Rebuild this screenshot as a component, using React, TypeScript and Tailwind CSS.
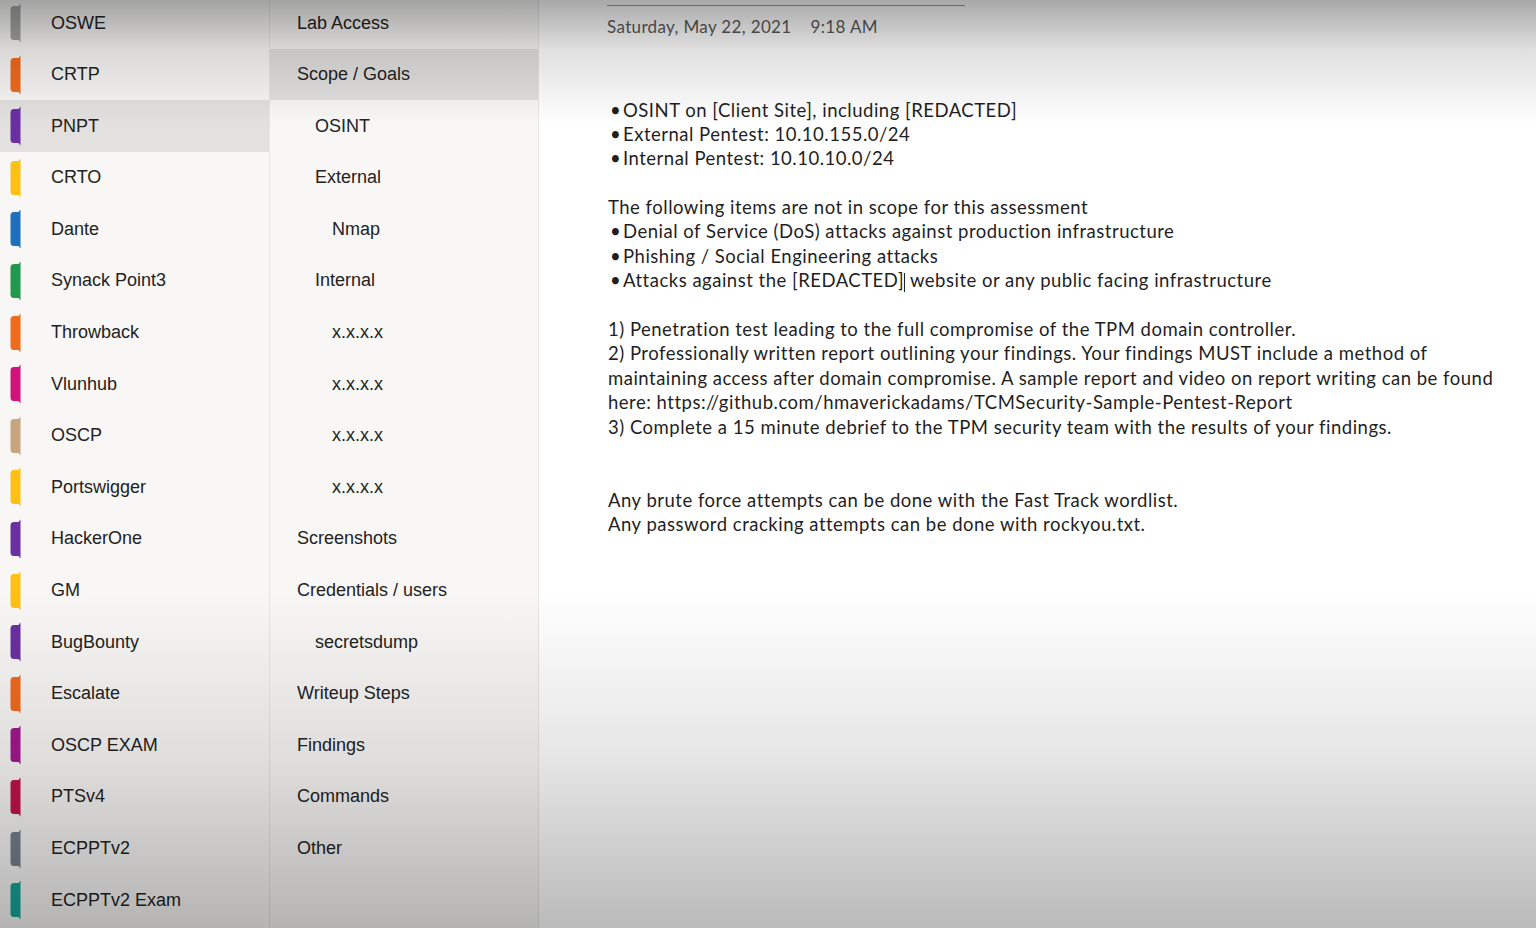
import React from "react";

const sections: { name: string; color: string }[] = [
  { name: "OSWE", color: "#a3a3a3" },
  { name: "CRTP", color: "#f26b1d" },
  { name: "PNPT", color: "#6b2fa3" },
  { name: "CRTO", color: "#ffc014" },
  { name: "Dante", color: "#1f6fbf" },
  { name: "Synack Point3", color: "#1f9a4d" },
  { name: "Throwback", color: "#f26b1d" },
  { name: "Vlunhub", color: "#d3127c" },
  { name: "OSCP", color: "#c8a57f" },
  { name: "Portswigger", color: "#ffc014" },
  { name: "HackerOne", color: "#6b2fa3" },
  { name: "GM", color: "#ffc014" },
  { name: "BugBounty", color: "#6b2fa3" },
  { name: "Escalate", color: "#f26b1d" },
  { name: "OSCP EXAM", color: "#a3178f" },
  { name: "PTSv4", color: "#c3124d" },
  { name: "ECPPTv2", color: "#76808a" },
  { name: "ECPPTv2 Exam", color: "#17a597" },
];

const pages: { name: string; level: number }[] = [
  { name: "Lab Access", level: 0 },
  { name: "Scope / Goals", level: 0 },
  { name: "OSINT", level: 1 },
  { name: "External", level: 1 },
  { name: "Nmap", level: 2 },
  { name: "Internal", level: 1 },
  { name: "x.x.x.x", level: 2 },
  { name: "x.x.x.x", level: 2 },
  { name: "x.x.x.x", level: 2 },
  { name: "x.x.x.x", level: 2 },
  { name: "Screenshots", level: 0 },
  { name: "Credentials / users", level: 0 },
  { name: "secretsdump", level: 1 },
  { name: "Writeup Steps", level: 0 },
  { name: "Findings", level: 0 },
  { name: "Commands", level: 0 },
  { name: "Other", level: 0 },
];

function Tab({ color }: { color: string }) {
  return (
    <svg width="12" height="40" viewBox="0 0 12 40" className="shrink-0">
      <path
        d="M11.5 0.5 L11.5 39.5 L9.5 37 L5 37 Q1.5 37 1.5 33.5 L1.5 6.5 Q1.5 3 5 3 L9.5 3 Z"
        fill={color}
      />
    </svg>
  );
}

const Line = ({ children }: { children?: React.ReactNode }) => (
  <div className="h-[24.4px] leading-[24.4px] whitespace-pre">{children ?? "\u00a0"}</div>
);

const Bullet = ({ children }: { children: React.ReactNode }) => (
  <div className="h-[24.4px] leading-[24.4px] whitespace-pre flex">
    <span className="w-[15px] pl-[2px]">•</span>
    <span>{children}</span>
  </div>
);

export default function App() {
  return (
    <div className="relative w-[1536px] h-[928px] overflow-hidden bg-white flex font-['Liberation_Sans',Arial,sans-serif]">
      {/* Sections column */}
      <div className="w-[269px] shrink-0 bg-[#f8f7f6] text-[18px] text-[#222]">
        <div className="mt-[-2.8px]">
          {sections.map((s) => (
            <div
              key={s.name}
              className={`h-[51.6px] flex items-center pl-[9px] ${s.name === "PNPT" ? "bg-[#e2e1e0]" : ""}`}
            >
              <Tab color={s.color} />
              <span className="ml-[30px]">{s.name}</span>
            </div>
          ))}
        </div>
      </div>

      {/* Pages column */}
      <div className="w-[270px] shrink-0 bg-[#f8f7f6] border-l border-r border-[#e6e5e4] text-[18px] text-[#222]">
        <div className="mt-[-2.8px]">
          {pages.map((p, i) => (
            <div
              key={i}
              className={`h-[51.6px] flex items-center ${p.level === 0 ? "pl-[27px]" : p.level === 1 ? "pl-[45px]" : "pl-[62px]"} ${p.name === "Scope / Goals" ? "bg-[#e2e1e0]" : ""}`}
            >
              {p.name}
            </div>
          ))}
        </div>
      </div>

      {/* Content */}
      <div className="flex-1 pl-[68px] font-['Lato','Open_Sans',sans-serif] text-[#1f1f1f]">
        <div className="w-[358px] h-[1px] bg-[#9a9a9a] mt-[5px]" />
        <div className="mt-[8px] text-[17px] tracking-[0.35px] text-[#5a5a5a] flex">
          <span>Saturday, May 22, 2021</span>
          <span className="ml-[19px]">9:18 AM</span>
        </div>
        <div className="mt-[58px] ml-[1px] text-[18.5px] tracking-[0.5px]">
          <Bullet>OSINT on [Client Site], including [REDACTED]</Bullet>
          <Bullet>External Pentest: 10.10.155.0/24</Bullet>
          <Bullet>Internal Pentest: 10.10.10.0/24</Bullet>
          <Line />
          <Line>The following items are not in scope for this assessment</Line>
          <Bullet>Denial of Service (DoS) attacks against production infrastructure</Bullet>
          <Bullet>Phishing / Social Engineering attacks</Bullet>
          <Bullet>
            Attacks against the [REDACTED]
            <span className="inline-block w-[1px] h-[19px] bg-[#222] align-middle" />
            {" website or any public facing infrastructure"}
          </Bullet>
          <Line />
          <Line>1) Penetration test leading to the full compromise of the TPM domain controller.</Line>
          <Line>2) Professionally written report outlining your findings. Your findings MUST include a method of</Line>
          <Line>maintaining access after domain compromise. A sample report and video on report writing can be found</Line>
          <Line>here: https://github.com/hmaverickadams/TCMSecurity-Sample-Pentest-Report</Line>
          <Line>3) Complete a 15 minute debrief to the TPM security team with the results of your findings.</Line>
          <Line />
          <Line />
          <Line>Any brute force attempts can be done with the Fast Track wordlist.</Line>
          <Line>Any password cracking attempts can be done with rockyou.txt.</Line>
        </div>
      </div>

      {/* Screen vignette */}
      <div className="pointer-events-none absolute inset-0 bg-[linear-gradient(to_bottom,rgba(0,0,0,0.34)_0px,rgba(0,0,0,0.12)_50px,rgba(0,0,0,0)_125px,rgba(0,0,0,0)_590px,rgba(0,0,0,0.1)_760px,rgba(0,0,0,0.27)_928px)]" />
    </div>
  );
}
